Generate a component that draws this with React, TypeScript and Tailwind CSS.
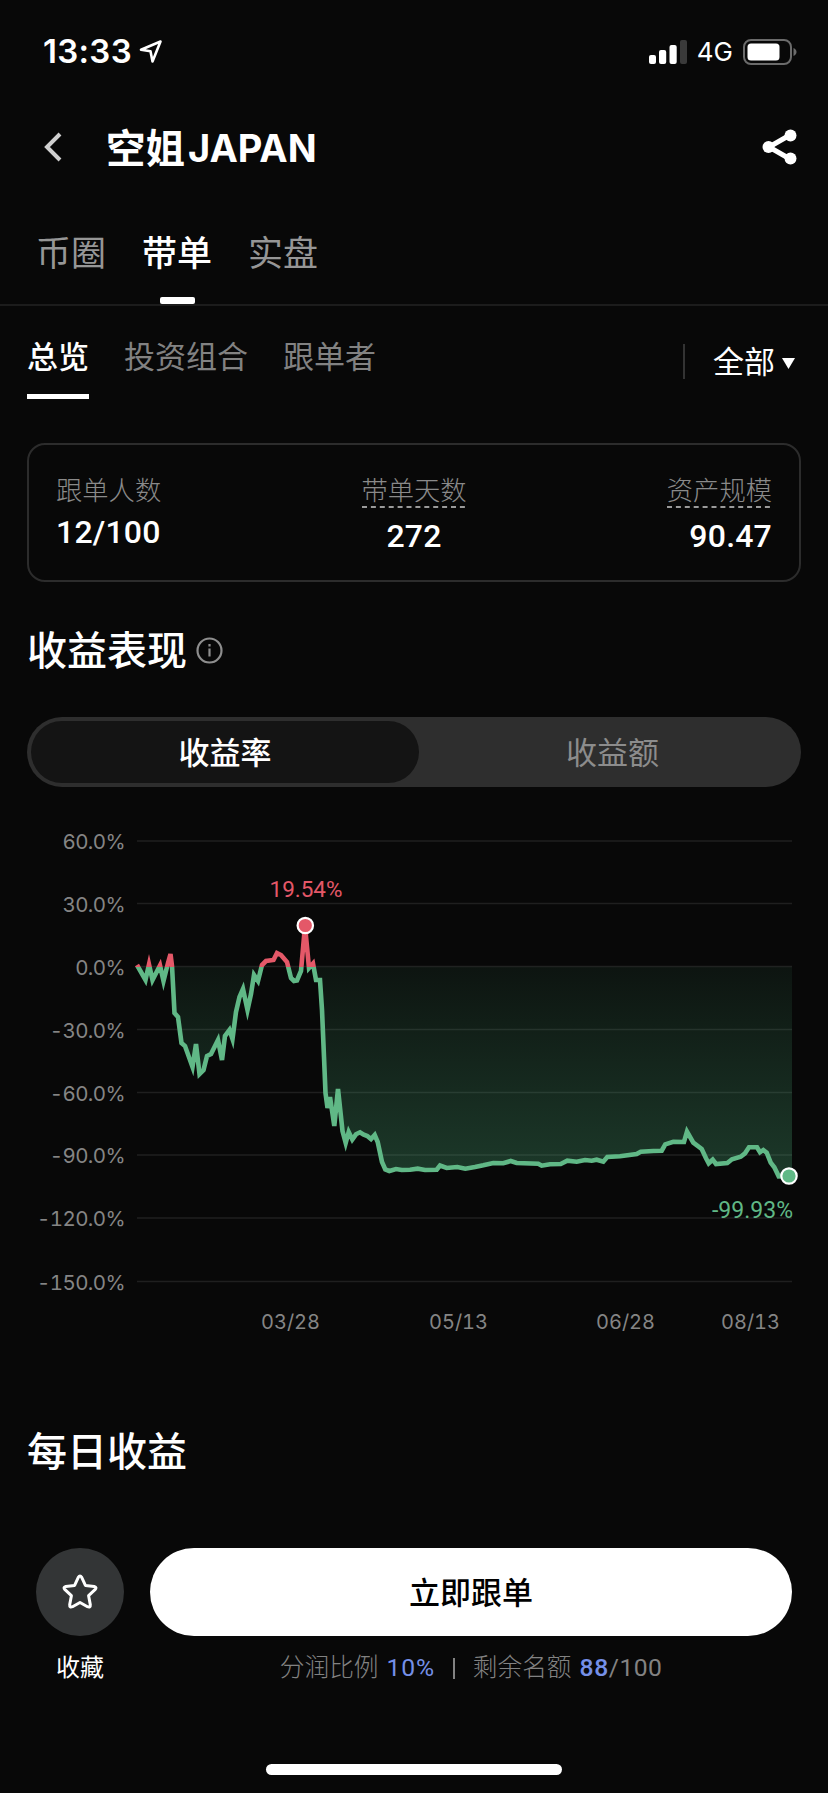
import { useState } from "react";

const TABS = ["币圈", "带单", "实盘"];
const SUB_TABS = ["总览", "投资组合", "跟单者"];
const MODES = ["收益率", "收益额"];

const STATS = [
  { label: "跟单人数", value: "12/100", hint: false, align: "items-start" },
  { label: "带单天数", value: "272", hint: true, align: "items-center" },
  { label: "资产规模", value: "90.47", hint: true, align: "items-end" },
];

const Y_TICKS = [
  { label: "60.0%", y: 21 },
  { label: "30.0%", y: 83.5 },
  { label: "0.0%", y: 146.5 },
  { label: "-30.0%", y: 209.5 },
  { label: "-60.0%", y: 272.5 },
  { label: "-90.0%", y: 335 },
  { label: "-120.0%", y: 398 },
  { label: "-150.0%", y: 461.5 },
];

const X_TICKS = [
  { label: "03/28", x: 290.5 },
  { label: "05/13", x: 458.5 },
  { label: "06/28", x: 625.5 },
  { label: "08/13", x: 750.5 },
];

const ZERO_Y = 146.5;

const POINTS = [
  [137, 145], [145.5, 160], [149, 144.5], [152.5, 160], [160, 145.5], [163.5, 161], [168, 143], [170.5, 134],
  [172, 146], [174.5, 193], [178, 197], [181.5, 223], [185, 226], [192.5, 247], [196, 224], [199.5, 254],
  [203.5, 250], [207, 236], [211, 234], [218, 220], [222, 240], [225, 216], [229.5, 210], [232.5, 219],
  [236, 192], [239.5, 177], [243, 169], [247.5, 190], [251, 174], [254, 155], [258, 161], [262, 145],
  [266, 141], [273.5, 140], [277, 133], [281, 135], [287, 142], [291, 158], [294, 161], [297, 160.5],
  [301, 151], [305, 106], [309, 148], [313, 143.5], [316, 160], [320, 160], [322, 190], [324, 237],
  [325.5, 273], [327.5, 288], [330, 277], [334.3, 306], [338, 269], [342.5, 311], [345.7, 323], [348.7, 312],
  [352.3, 319.5], [356, 314.3], [360, 312.3], [363.3, 314.5], [367.3, 316], [371, 319], [374.7, 315],
  [377.7, 322], [382, 342], [385.3, 349.5], [389.3, 351], [396, 349], [401.7, 350], [410, 349.7],
  [417.7, 348.7], [425, 350], [436.7, 349.7], [440, 345.5], [446.7, 348], [457.3, 347], [465.3, 348.7],
  [475, 347], [483.3, 345.3], [493.3, 343], [503.3, 343.3], [510.7, 341], [516.7, 343], [538.3, 343.7],
  [541.7, 345.7], [550, 344.3], [560.7, 344], [567.3, 340.7], [576.7, 341.7], [585, 340], [591.7, 340.7],
  [596.7, 339.7], [603.3, 341.7], [607.3, 337], [620, 336.3], [636.7, 334], [640.7, 331.7], [653.3, 331],
  [661.7, 330.7], [665.3, 324.3], [673.3, 321.7], [684, 322], [687, 311.7], [693.3, 322.7], [701.7, 329],
  [706, 338.3], [708.7, 343.3], [712.7, 339.7], [716, 344], [727.3, 343], [732, 339.3], [740.7, 336.7],
  [745, 333.3], [749, 327.3], [757, 327.3], [760, 332.3], [763.3, 330], [766.7, 332.7], [770.7, 342.7],
  [774.3, 347.3], [778.7, 356.3], [789, 356],
];

const LINE = POINTS.map(([x, y], i) => `${i === 0 ? "M" : "L"}${x} ${y}`).join("");
const AREA = `${LINE}L792 356L792 ${ZERO_Y}L137 ${ZERO_Y}Z`;

function StatusBar() {
  return (
    <div className="flex h-[103px] items-center justify-between pl-[43px] pr-[31px]">
      <div className="flex items-center gap-[7px]">
        <span className="font-['Inter',sans-serif] text-[33px] leading-none font-semibold tracking-[0.3px]">13:33</span>
        <svg width="24" height="24" viewBox="0 0 24 24" fill="none" stroke="currentColor" strokeWidth="2.6" strokeLinejoin="round">
          <path d="M21.5 1.500 2 9.700 11.500 11.300 13.500 21.500Z" />
        </svg>
      </div>
      <div className="flex items-center">
        <svg width="38" height="24" viewBox="0 0 38 24" fill="currentColor">
          <rect x="0" y="15" width="7" height="9" rx="2" />
          <rect x="10" y="10" width="7.2" height="14" rx="2" />
          <rect x="20.5" y="5" width="7.2" height="19" rx="2" />
          <rect x="31" y="0" width="7" height="24" rx="2" fill="#3a3a3a" />
        </svg>
        <span className="ml-2.5 font-['Inter',sans-serif] text-[26px] leading-none">4G</span>
        <svg className="ml-2.5" width="54" height="26" viewBox="0 0 54 26">
          <rect x="1" y="1" width="47" height="24" rx="7" fill="none" stroke="#6b6b6b" strokeWidth="2" />
          <rect x="4.5" y="4.5" width="32" height="17" rx="3.5" fill="#fff" />
          <path d="M50.5 9c4 1.5 4 6.500 0 8Z" fill="#6b6b6b" />
        </svg>
      </div>
    </div>
  );
}

function TitleBar() {
  return (
    <div className="flex h-[88px] items-center pl-11 pr-[31px]">
      <svg width="18" height="30" viewBox="0 0 18 30" fill="none" stroke="#d0d0d0" strokeWidth="4">
        <path d="M16 2 3 15 16 28" />
      </svg>
      <h1 className="ml-[44px] flex items-center leading-none font-bold">
        <span className="-mt-[3px] text-[39.5px]">空姐</span>
        <span className="ml-[3px] mt-0.5 font-['Inter',sans-serif] text-[38px]">JAPAN</span>
      </h1>
      <svg className="ml-auto" width="35" height="36" viewBox="0 0 35 36" fill="currentColor">
        <path d="M28 6 7 18 28 30" fill="none" stroke="currentColor" strokeWidth="5" />
        <circle cx="28.500" cy="6.500" r="6" />
        <circle cx="6.500" cy="18" r="6" />
        <circle cx="28.500" cy="29.500" r="6" />
      </svg>
    </div>
  );
}

function Chart() {
  return (
    <svg className="block" width="828" height="520" viewBox="0 0 828 520">
      <defs>
        <linearGradient id="line" gradientUnits="userSpaceOnUse" x1="0" y1="0" x2="0" y2={ZERO_Y * 2}>
          <stop offset="0.5" stopColor="#e45868" />
          <stop offset="0.5" stopColor="#60b886" />
        </linearGradient>
        <linearGradient id="area" gradientUnits="userSpaceOnUse" x1="0" y1={ZERO_Y} x2="0" y2="356">
          <stop offset="0" stopColor="#50b880" stopOpacity="0.07" />
          <stop offset="1" stopColor="#50b880" stopOpacity="0.28" />
        </linearGradient>
        <clipPath id="below">
          <rect x="137" y={ZERO_Y} width="655" height="220" />
        </clipPath>
      </defs>
      {Y_TICKS.map((tick) => (
        <g key={tick.label}>
          <line x1="137" x2="792" y1={tick.y} y2={tick.y} stroke="#1f1f1f" strokeWidth="1.4" />
          <text x="125" y={tick.y + 8} textAnchor="end" className="fill-[#858585] font-['Inter',sans-serif] text-[20.5px] tracking-[-0.6px] tabular-nums">{tick.label}</text>
        </g>
      ))}
      {X_TICKS.map((tick) => (
        <text key={tick.label} x={tick.x} y="508.500" textAnchor="middle" className="fill-[#858585] font-['Inter',sans-serif] text-[20px] tabular-nums">{tick.label}</text>
      ))}
      <path d={AREA} fill="url(#area)" clipPath="url(#below)" />
      <path d={LINE} fill="none" stroke="url(#line)" strokeWidth="4.6" strokeLinejoin="miter" strokeMiterlimit="5" />
      <circle cx="305.300" cy="105.500" r="7.700" fill="#e45868" stroke="#fff" strokeWidth="2.2" />
      <circle cx="789" cy="356" r="7.700" fill="#60b886" stroke="#fff" strokeWidth="2.2" />
      <text x="306" y="77" textAnchor="middle" className="fill-[#e45868] font-['Roboto',sans-serif] text-[22.500px]">19.54%</text>
      <text x="793" y="398" textAnchor="end" className="fill-[#60b886] font-['Roboto',sans-serif] text-[23px]">-99.93%</text>
    </svg>
  );
}

export default function App() {
  const [tab, setTab] = useState("带单");
  const [subTab, setSubTab] = useState("总览");
  const [mode, setMode] = useState("收益率");

  return (
    <div className="h-[1793px] w-[828px] overflow-hidden bg-[#080808] font-['Noto_Sans_CJK_SC',sans-serif] text-white">
      <StatusBar />
      <TitleBar />

      <nav className="flex h-[115px] items-start gap-9 border-b-2 border-[#1c1c1c] pl-9">
        {TABS.map((item) => (
          <button key={item} onClick={() => setTab(item)} className={`flex flex-col items-center pt-[42px] text-[35px] leading-[36px] ${item === tab ? "font-medium text-white" : "text-[#969696]"}`}>
            {item}
            {item === tab && <span className="mt-[28px] h-[7px] w-[35px] rounded-xs bg-white" />}
          </button>
        ))}
      </nav>

      <div className="flex h-[137px] items-start pl-[27px] pr-[33px] pt-[33px]">
        <div className="flex items-start gap-[35px]">
          {SUB_TABS.map((item) => (
            <button key={item} onClick={() => setSubTab(item)} className={`text-[31px] leading-8 ${item === subTab ? "font-medium text-white" : "text-[#828282]"}`}>
              {item}
              {item === subTab && <span className="mt-[23px] block h-[5px] bg-white" />}
            </button>
          ))}
        </div>
        <div className="ml-auto mt-0.5 flex h-10 items-center">
          <span className="h-[35px] w-0.5 bg-[#333]" />
          <span className="-mt-[3px] ml-7 mr-px text-[31px] leading-8">全部</span>
          <svg className="ml-1.5 mt-1" width="13" height="11" viewBox="0 0 13 11" fill="currentColor">
            <path d="M0 0H13L6.500 11Z" />
          </svg>
        </div>
      </div>

      <section className="mx-[27px] flex h-[139px] justify-between rounded-[18px] border-2 border-[#2c2c2c] px-[27px] pt-[30px]">
        {STATS.map((stat) => (
          <div key={stat.label} className={`flex flex-col ${stat.align}`}>
            <span className="text-[26.300px] leading-[28px] font-light text-[#8a8a8a]">{stat.label}</span>
            {stat.hint && (
              <svg className="mt-[3px]" width="105" height="2" viewBox="0 0 105 2">
                <line x1="0" x2="105" y1="1" y2="1" stroke="#9a9a9a" strokeWidth="2" strokeDasharray="5 3.900" />
              </svg>
            )}
            <span className={`font-['Roboto',sans-serif] text-[32px] leading-8 font-medium tracking-[0.2px] ${stat.hint ? "mt-3" : "mt-[13px]"}`}>{stat.value}</span>
          </div>
        ))}
      </section>

      <h2 className="mt-[46px] flex h-10 items-center pl-[27px] text-[40px] leading-10 font-medium">
        收益表现
        <svg className="ml-[9px] mt-1" width="27" height="27" viewBox="0 0 27 27" fill="none" stroke="#8e8e8e" strokeWidth="2.2">
          <circle cx="13.500" cy="13.500" r="12" />
          <path d="M13.500 11.500v8M13.500 7v2.500" />
        </svg>
      </h2>

      <div className="mx-[27px] mt-[49px] flex h-[70px] rounded-full bg-[#2e2e2e] p-1 pr-0">
        {MODES.map((item) => (
          <button key={item} onClick={() => setMode(item)} className={`rounded-full pb-[3px] text-[31px] leading-8 ${item === mode ? "w-[388px] shrink-0 bg-[#141414] font-medium text-white" : "flex-1 pl-[5px] text-[#8c8c8c]"}`}>
            {item}
          </button>
        ))}
      </div>

      <div className="mt-[33px]">
        <Chart />
      </div>

      <h2 className="mt-[89px] pl-[27px] text-[40px] leading-10 font-medium">每日收益</h2>

      <footer className="mt-[79px] flex pl-[36px]">
        <div className="flex w-[88px] flex-col items-center">
          <button className="flex size-[88px] items-center justify-center rounded-full bg-[#333536]">
            <svg width="36" height="36" viewBox="0 0 36 36" fill="none" stroke="currentColor" strokeWidth="3" strokeLinejoin="round">
              <path d="M16.300 3.300Q18 0.700 19.700 3.300L23.400 11.400 32.200 12.400Q35.300 13.200 33 15.700L26.600 21.700 28.300 30.600Q28.600 34 25.500 32.700L18 28.500 10.500 32.700Q7.400 34 7.700 30.600L9.400 21.700 3 15.700Q0.700 13.200 3.800 12.400L12.600 11.400Z" />
            </svg>
          </button>
          <span className="mt-[18px] text-[24px] leading-6">收藏</span>
        </div>
        <div className="ml-[26px] flex w-[642px] flex-col items-center">
          <button className="h-[88px] w-full rounded-full bg-white pb-[3px] text-[31px] leading-8 font-medium text-black">立即跟单</button>
          <p className="mt-5 flex items-center font-['Roboto','Noto_Sans_CJK_SC',sans-serif] text-[24.700px] leading-6 font-light text-[#828282]">
            <span>分润比例</span>
            <span className="ml-2 font-normal tracking-[0.8px] text-[#7590e8]">10%</span>
            <span className="mx-[18px] h-[21px] w-0.5 bg-[#828282]" />
            <span>剩余名额</span>
            <span className="ml-2 font-medium tracking-[0.6px] text-[#7590e8]">88</span>
            <span className="font-normal tracking-[0.4px]">/100</span>
          </p>
        </div>
      </footer>

      <div className="mx-auto mt-[84px] h-[11px] w-[296px] rounded-full bg-white" />
    </div>
  );
}
